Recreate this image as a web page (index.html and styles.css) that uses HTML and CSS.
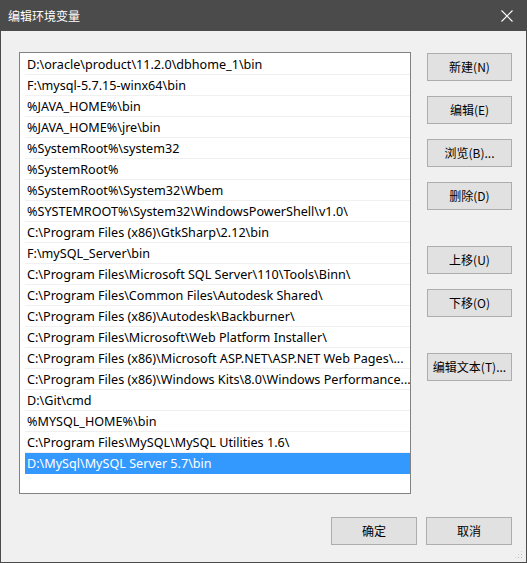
FILE: index.html
```html
<!DOCTYPE html>
<html lang="zh-CN">
<head>
<meta charset="utf-8">
<title>编辑环境变量</title>
<link rel="stylesheet" href="styles.css">
</head>
<body>
<div class="window">
  <div class="titlebar">
    <span class="title">编辑环境变量</span>
    <svg class="close" width="12" height="12" viewBox="0 0 12 12"><path d="M0.5 0.5 L11.5 11.5 M11.5 0.5 L0.5 11.5" stroke="#ffffff" stroke-width="1.1" fill="none"/></svg>
  </div>
  <div class="content">
    <div class="main">
      <div class="list">
        <div class="row">D:\oracle\product\11.2.0\dbhome_1\bin</div>
        <div class="row">F:\mysql-5.7.15-winx64\bin</div>
        <div class="row">%JAVA_HOME%\bin</div>
        <div class="row">%JAVA_HOME%\jre\bin</div>
        <div class="row">%SystemRoot%\system32</div>
        <div class="row">%SystemRoot%</div>
        <div class="row">%SystemRoot%\System32\Wbem</div>
        <div class="row">%SYSTEMROOT%\System32\WindowsPowerShell\v1.0\</div>
        <div class="row">C:\Program Files (x86)\GtkSharp\2.12\bin</div>
        <div class="row">F:\mySQL_Server\bin</div>
        <div class="row">C:\Program Files\Microsoft SQL Server\110\Tools\Binn\</div>
        <div class="row">C:\Program Files\Common Files\Autodesk Shared\</div>
        <div class="row">C:\Program Files (x86)\Autodesk\Backburner\</div>
        <div class="row">C:\Program Files\Microsoft\Web Platform Installer\</div>
        <div class="row">C:\Program Files (x86)\Microsoft ASP.NET\ASP.NET Web Pages\...</div>
        <div class="row">C:\Program Files (x86)\Windows Kits\8.0\Windows Performance...</div>
        <div class="row">D:\Git\cmd</div>
        <div class="row">%MYSQL_HOME%\bin</div>
        <div class="row">C:\Program Files\MySQL\MySQL Utilities 1.6\</div>
        <div class="row selected">D:\MySql\MySQL Server 5.7\bin</div>
      </div>
      <div class="side">
        <button class="btn">新建(N)</button>
        <button class="btn g14">编辑(E)</button>
        <button class="btn g14">浏览(B)...</button>
        <button class="btn g14">删除(D)</button>
        <button class="btn g36">上移(U)</button>
        <button class="btn g14">下移(O)</button>
        <button class="btn g36">编辑文本(T)...</button>
      </div>
    </div>
    <div class="footer">
      <button class="btn wide">确定</button>
      <button class="btn wide">取消</button>
    </div>
    <div class="grip"></div>
  </div>
</div>
</body>
</html>
```
FILE: styles.css
```css
* { box-sizing: border-box; }
html, body { margin: 0; padding: 0; background: #f0f0f0; }
body {
  font-family: "Noto Sans", "Noto Sans CJK SC", sans-serif;
  font-size: 12px;
  color: #000;
}
.window {
  width: 527px;
  height: 563px;
  border: 1px solid #4b4b4b;
  border-top: none;
  display: flex;
  flex-direction: column;
  background: #f0f0f0;
}
.titlebar {
  height: 31px;
  margin: 0 -1px;
  background: #4b4b4b;
  display: flex;
  align-items: center;
  justify-content: space-between;
  padding: 0 14px 0 8px;
  flex: none;
}
.title {
  color: #ffffff;
  font-family: "Noto Sans CJK SC", sans-serif;
  font-size: 12px;
  line-height: 31px;
}
.close { display: block; margin-top: 0; }
.content {
  flex: 1;
  padding: 21px 14px 0 18px;
  display: flex;
  flex-direction: column;
  position: relative;
}
.main {
  display: flex;
  gap: 16px;
}
.list {
  width: 392px;
  height: 442px;
  border: 1px solid #828282;
  background: #ffffff;
  padding: 1px 0 0 5px;
  overflow: hidden;
  font-size: 12.6px;
}
.row {
  height: 21px;
  line-height: 20px;
  padding: 1px 0 0 2px;
  border-bottom: 1px solid #f0f0f0;
  white-space: nowrap;
  overflow: hidden;
}
.row.selected {
  background: #3399ff;
  color: #ffffff;
  border-bottom-color: #3399ff;
}
.side {
  display: flex;
  flex-direction: column;
  padding-top: 1px;
}
.btn {
  width: 85px;
  height: 28px;
  margin: 0;
  padding: 0 0 2px;
  background: #e1e1e1;
  border: 1px solid #adadad;
  font-family: "Noto Sans CJK SC", sans-serif;
  font-size: 12px;
  color: #000;
  display: flex;
  align-items: center;
  justify-content: center;
}
.g14 { margin-top: 15px; }
.g36 { margin-top: 36px; }
.footer {
  display: flex;
  justify-content: flex-end;
  gap: 9px;
  margin-top: 23px;
}
.btn.wide { width: 86px; }
.grip {
  position: absolute;
  right: 3px;
  bottom: 3px;
  width: 9px;
  height: 9px;
  background:
    radial-gradient(circle, #b8b8b8 0.8px, transparent 1px) 0 0 / 3px 3px;
  clip-path: polygon(100% 0, 100% 100%, 0 100%);
}
```
